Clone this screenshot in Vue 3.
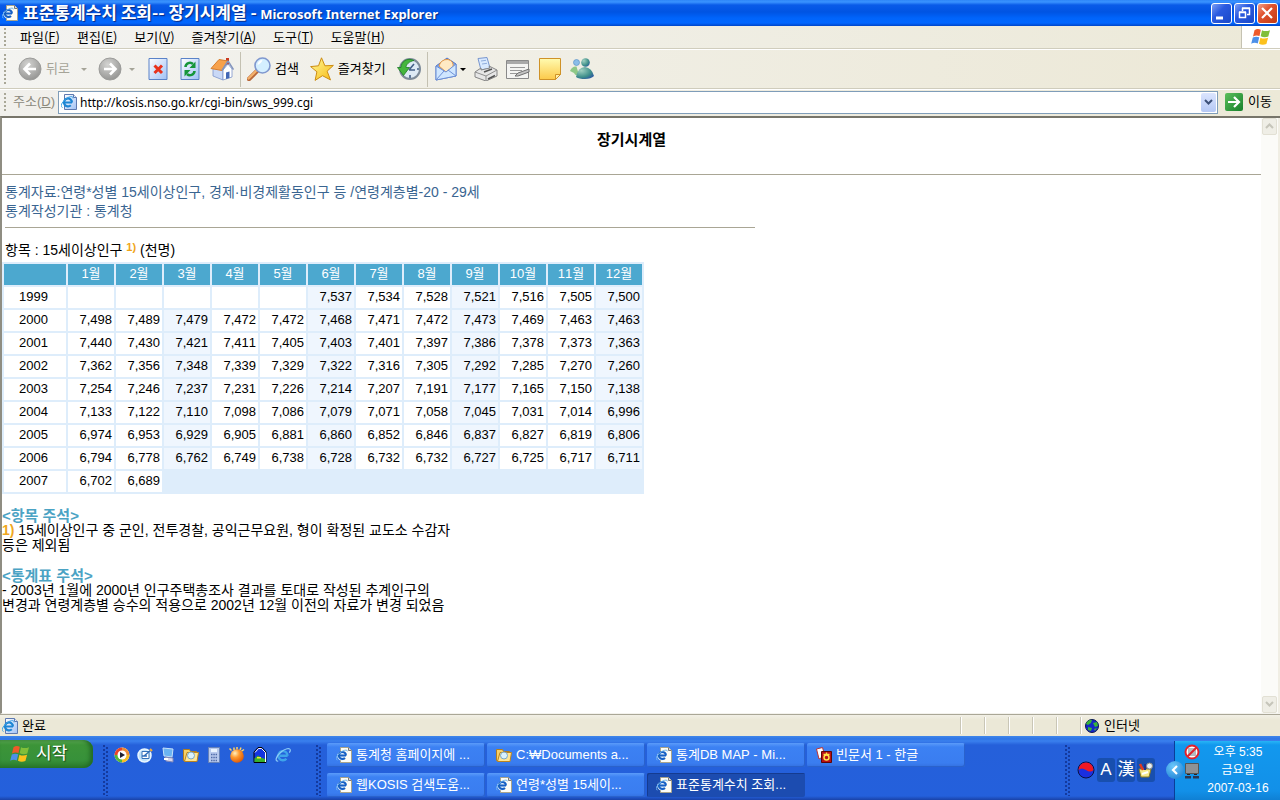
<script setup>
const menus = [
  ['파일', 'F'], ['편집', 'E'], ['보기', 'V'], ['즐겨찾기', 'A'], ['도구', 'T'], ['도움말', 'H'],
]

const months = Array.from({ length: 12 }, (_, i) => `${i + 1}월`)

const rows = [
  { year: 1999, values: ['', '', '', '', '', '7,537', '7,534', '7,528', '7,521', '7,516', '7,505', '7,500'] },
  { year: 2000, values: ['7,498', '7,489', '7,479', '7,472', '7,472', '7,468', '7,471', '7,472', '7,473', '7,469', '7,463', '7,463'] },
  { year: 2001, values: ['7,440', '7,430', '7,421', '7,411', '7,405', '7,403', '7,401', '7,397', '7,386', '7,378', '7,373', '7,363'] },
  { year: 2002, values: ['7,362', '7,356', '7,348', '7,339', '7,329', '7,322', '7,316', '7,305', '7,292', '7,285', '7,270', '7,260'] },
  { year: 2003, values: ['7,254', '7,246', '7,237', '7,231', '7,226', '7,214', '7,207', '7,191', '7,177', '7,165', '7,150', '7,138'] },
  { year: 2004, values: ['7,133', '7,122', '7,110', '7,098', '7,086', '7,079', '7,071', '7,058', '7,045', '7,031', '7,014', '6,996'] },
  { year: 2005, values: ['6,974', '6,953', '6,929', '6,905', '6,881', '6,860', '6,852', '6,846', '6,837', '6,827', '6,819', '6,806'] },
  { year: 2006, values: ['6,794', '6,778', '6,762', '6,749', '6,738', '6,728', '6,732', '6,732', '6,727', '6,725', '6,717', '6,711'] },
  { year: 2007, values: ['6,702', '6,689'] },
]

const quick = ['player', 'outlook', 'desktop', 'folder', 'calc', 'ball', 'picture', 'ie']

const tasks = [
  { icon: 'page', label: '통계청 홈페이지에 ...' },
  { icon: 'folder', label: 'C:₩Documents a...' },
  { icon: 'page', label: '통계DB MAP - Mi...' },
  { icon: 'hangul', label: '빈문서 1 - 한글' },
  { icon: 'page', label: '웹KOSIS 검색도움...' },
  { icon: 'page', label: '연령*성별 15세이...' },
  { icon: 'page', label: '표준통계수치 조회...', active: true },
]
</script>

<template>
  <div class="screen">
    <svg class="defs" aria-hidden="true">
      <defs>
        <linearGradient id="gBlue" x1="0" y1="0" x2="1" y2="1"><stop offset="0" stop-color="#fff" /><stop offset="1" stop-color="#9fc0f5" /></linearGradient>
        <radialGradient id="gGray" cx=".4" cy=".3" r=".8"><stop offset="0" stop-color="#d4d4d2" /><stop offset="1" stop-color="#8e8e8c" /></radialGradient>
        <linearGradient id="gNote" x1="0" y1="0" x2="0" y2="1"><stop offset="0" stop-color="#fffbb0" /><stop offset="1" stop-color="#fcc94a" /></linearGradient>
        <linearGradient id="gStar" x1="0" y1="0" x2="1" y2="1"><stop offset="0" stop-color="#fffa9a" /><stop offset="1" stop-color="#f7b912" /></linearGradient>
        <radialGradient id="gBall" cx=".35" cy=".3" r=".8"><stop offset="0" stop-color="#fff0c0" /><stop offset=".4" stop-color="#ff9a2e" /><stop offset="1" stop-color="#d94e00" /></radialGradient>
        <radialGradient id="gMan" cx=".3" cy=".3" r=".9"><stop offset="0" stop-color="#9fd0c0" /><stop offset=".6" stop-color="#3f8f8a" /><stop offset="1" stop-color="#2446a8" /></radialGradient>

        <symbol id="ie" viewBox="0 0 16 16">
          <path d="M12.6 8.8H5M12.6 8.8a4.6 4.6 0 1 0-1.2 3" fill="none" stroke="#3fa4ea" stroke-width="2.4" />
          <path d="M3.2 14.2C-.5 14.500 1 9 6 5c4-3.300 9-4.600 9.300-2 .1 1-.5 1.800-1 2.600" fill="none" stroke="#8ccbf6" stroke-width="1.200" />
        </symbol>
        <symbol id="page" viewBox="0 0 16 16">
          <path d="M4.500.5h8l3 3v12h-11z" fill="#fdfdf6" stroke="#a9a48c" />
          <path d="M12.500.5v3h3" fill="#ddd" stroke="#777" />
          <path d="M5.500 4.500a4.500 4.500 0 1 0 4 7z" fill="#d6ebfb" />
          <path d="M10 8.500H3M10 8.500a3.600 3.600 0 1 0-1 2.500" fill="none" stroke="#1660c4" stroke-width="2" />
          <path d="M1.500 13C-1.500 12.500 1 8 5 5 8 3 11.500 2.200 11.300 4.400" fill="none" stroke="#6cb4ee" />
        </symbol>
        <symbol id="bluepage" viewBox="0 0 16 16">
          <path d="M3.500.5h9l3 3v12h-12z" fill="url(#gBlue)" stroke="#5e79b0" />
          <path d="M12.500.5v3h3" fill="#e6eefc" stroke="#5e79b0" />
          <path d="M11 8.500H3.500M11 8.500a4 4 0 1 0-1.200 2.800" fill="none" stroke="#1e86d4" stroke-width="2.200" />
          <path d="M1.500 13.500C-1.500 12.500 1 8 5.500 4.500 9 2 12.500 2 12 4.400" fill="none" stroke="#3aa0e4" />
        </symbol>
        <symbol id="flag" viewBox="0 0 20 18">
          <path d="M3.500 2.200Q6.500 0 9.800 1.800L8.500 8Q5.500 6.600 2 8.400z" fill="#ef5a29" />
          <path d="M11 2.200q3.500 1.800 8 0l-1.700 6.200q-3.500 1.700-7.600-.1z" fill="#80bf3a" />
          <path d="M1.800 9.600Q5 7.900 8.200 9.300L6.800 15.500Q3.500 14 .2 15.700z" fill="#4d90e8" />
          <path d="M9.400 9.700q3.500 1.700 7.700.1l-1.700 6.100q-3.700 1.700-7.400-.1z" fill="#fcc11c" />
        </symbol>
        <symbol id="back" viewBox="0 0 24 24">
          <circle cx="12" cy="12" r="11" fill="url(#gGray)" stroke="#9c9c9a" />
          <path d="M18 12H7M12 6.500 6.500 12l5.500 5.500" fill="none" stroke="#fff" stroke-width="2.600" />
        </symbol>
        <symbol id="fwd" viewBox="0 0 24 24">
          <circle cx="12" cy="12" r="11" fill="url(#gGray)" stroke="#9c9c9a" />
          <path d="M6 12h11M12 6.500 17.500 12 12 17.500" fill="none" stroke="#fff" stroke-width="2.600" />
        </symbol>
        <symbol id="stop" viewBox="0 0 24 24">
          <path d="M3 1.500h18v21H3z" fill="url(#gBlue)" stroke="#5a82c8" />
          <path d="m8.500 8.500 7.500 7.500m0-7.500-7.500 7.500" stroke="#e8321c" stroke-width="3" />
        </symbol>
        <symbol id="refresh" viewBox="0 0 24 24">
          <path d="M3 1.500h18v21H3z" fill="url(#gBlue)" stroke="#5a82c8" />
          <path d="M7.500 10a4.500 4.500 0 0 1 7.500-3M16.500 14a4.500 4.500 0 0 1-7.500 3" fill="none" stroke="#16963a" stroke-width="2.600" />
          <path d="M17.500 4.500V11h-6zM6.500 19.500V13h6z" fill="#16963a" />
        </symbol>
        <symbol id="home" viewBox="0 0 24 24">
          <path d="M16 1h3v7h-3z" fill="#c93a20" />
          <path d="M3 12v7l10 4V11L8 6z" fill="#c9d8f6" stroke="#7d96cb" stroke-width=".8" />
          <path d="m13 13 5-6 4 5v8l-9 3z" fill="#fff" stroke="#7d96cb" stroke-width=".8" />
          <path d="M1 11.500 9 2.500 18 4l-6 9.500z" fill="#f7a14b" stroke="#d87d2c" />
          <path d="m18 4 5.500 8.500M12 13.500 18 4" stroke="#8394bd" stroke-width="1.500" />
          <path d="M16 15.500l3.500-1V21L16 22z" fill="#4266b5" />
        </symbol>
        <symbol id="search" viewBox="0 0 24 24">
          <path d="m10 14-8 8" stroke="#b8683a" stroke-width="4.500" stroke-linecap="round" />
          <path d="m9.500 13.500-8 8" stroke="#f3b16c" stroke-width="2.400" stroke-linecap="round" />
          <circle cx="15.500" cy="8.500" r="7.500" fill="#d4efff" stroke="#8098cf" stroke-width="1.600" />
          <path d="M10.500 8a5 5 0 0 1 5-5c-1 3-3 4-5 5z" fill="#fff" />
        </symbol>
        <symbol id="star" viewBox="0 0 24 24">
          <path d="m11.500.8 3.400 8 8.500-.4-6.300 5.800 3.400 8.700-8-4.200-7.400 4.700 1.800-8.600L.6 9.600l7.900-.8z" fill="url(#gStar)" stroke="#cc8c14" stroke-linejoin="round" />
        </symbol>
        <symbol id="history" viewBox="0 0 24 24">
          <circle cx="13" cy="12" r="10" fill="#ddeaf5" stroke="#7d8b99" stroke-width="2" />
          <path d="m12 13 5-6M12 13h6M13 18v3M20 12h2" stroke="#436088" stroke-width="1.600" fill="none" />
          <path d="M17 3.500C10 0 4 5 4 10.500H.5l6 8 6-8H9c0-3 3-6 8-7z" fill="#45b63d" stroke="#1d7c24" stroke-width=".8" />
        </symbol>
        <symbol id="mail" viewBox="0 0 24 24">
          <path d="M2 9 13 1l9 6v12L2 23z" fill="#7fa6e8" stroke="#5577c5" />
          <path d="M5 9q2-7 9-6.500Q20 4 19 10l-7 5z" fill="#ffe9c4" stroke="#ec9a42" />
          <path d="m2 9 10 6 10-8v12L2 23z" fill="#cfe6ff" stroke="#6d90d6" />
          <path d="m2 23 8-9m12 5-8-6" stroke="#6d90d6" />
        </symbol>
        <symbol id="printer" viewBox="0 0 24 24">
          <path d="M4 1.500 13 .5 16 11l-9 2z" fill="#d8e9ff" stroke="#7896ce" />
          <path d="m7 4 5-.7M8 7l5-.7" stroke="#90aede" />
          <path d="m1 15 6-4v2l9-2-1-2 8 4v6L12 24 1 20z" fill="#e6e6e6" stroke="#858585" />
          <path d="m1 15 11 4 11-6M12 19v5" fill="none" stroke="#8f8f8f" />
          <path d="m10 15 8-3M14 22l7-3.500" stroke="#555" stroke-width="1.500" />
        </symbol>
        <symbol id="edit" viewBox="0 0 24 24">
          <path d="M.5 3.500h22v18H.5z" fill="#f4f4f2" stroke="#898989" />
          <path d="M1 4h21v3H1z" fill="#a9a9a9" />
          <path d="M4 10.500h15M4 13.500h12M4 16.500h7" stroke="#999" />
          <path d="m9 19 3-3 11-4v3l-11 4z" fill="#c4c4c4" stroke="#707070" />
        </symbol>
        <symbol id="note" viewBox="0 0 24 24">
          <path d="M1.500 1.500h21v16l-5 5h-16z" fill="url(#gNote)" stroke="#cf9227" />
          <path d="M17.500 22.500v-5h5z" fill="#fff0a6" stroke="#cf9227" />
        </symbol>
        <symbol id="people" viewBox="0 0 24 24">
          <circle cx="6.500" cy="5.500" r="3" fill="#8abde8" stroke="#5c93c9" stroke-width=".7" />
          <path d="M0 14q2-5 6.500-4.500L9 18q-4 1-5-2z" fill="#8fc887" />
          <circle cx="15.500" cy="5.500" r="4.300" fill="url(#gMan)" />
          <path d="M6 20q2-10 9-10 7 1 9 9-3 3-9 3-6 0-9-2z" fill="url(#gMan)" />
        </symbol>
        <symbol id="player" viewBox="0 0 16 16">
          <circle cx="8" cy="8" r="7.500" fill="#f8f8f8" />
          <path d="M8 .5A7.500 7.500 0 0 0 .5 8L4 8a4 4 0 0 1 4-4z" fill="#e8452a" />
          <path d="M.5 8A7.500 7.500 0 0 0 8 15.500V12a4 4 0 0 1-4-4z" fill="#56b63b" />
          <path d="M8 15.500A7.500 7.500 0 0 0 15.500 8H12a4 4 0 0 1-4 4z" fill="#f6bd23" />
          <path d="M8 .5A7.500 7.500 0 0 1 15.500 8H12a4 4 0 0 0-4-4z" fill="#ee8c35" />
          <circle cx="8" cy="8" r="4.500" fill="#fff" /><path d="m6 5 5 3-5 3z" fill="#223" />
        </symbol>
        <symbol id="outlook" viewBox="0 0 16 16">
          <circle cx="7.500" cy="8.500" r="6.500" fill="#bfe2fb" stroke="#e9f6ff" stroke-width="1.500" />
          <path d="M5 4.500h7v7H5z" fill="#fff" stroke="#3672b8" />
          <path d="m7 9 7-6M5 9h5" stroke="#2f6fba" stroke-width="1.500" /><path d="m13 2 2 2" stroke="#f3a935" stroke-width="2" />
        </symbol>
        <symbol id="desktop" viewBox="0 0 16 16">
          <path d="m3 1 10 1-1 8-8-1z" fill="#6bb3f2" stroke="#c7e2fa" />
          <path d="m5 10 8 1v4l-7-1z" fill="#d9d7ee" stroke="#8088b8" /><path d="M4 12h4" stroke="#fff" stroke-width="2" />
        </symbol>
        <symbol id="folder" viewBox="0 0 16 16">
          <path d="M.5 2.500h6l1 2h6v9H.5z" fill="#f7d067" stroke="#b17d1e" />
          <path d="M4 5.500h11.500l-1.500 9H1.500z" fill="#ffe594" stroke="#ba8421" />
          <circle cx="8" cy="8.500" r="3.500" fill="#d9f2ff" stroke="#7ba7c4" />
        </symbol>
        <symbol id="calc" viewBox="0 0 16 16">
          <path d="M2.500.5h11v15h-11z" fill="#b7c9ed" stroke="#6682b9" />
          <path d="M5 2h6v3H5z" fill="#eaf4ff" />
          <path d="M5 7.500h6M5 10.500h6M5 13.500h6" stroke="#4f6ba8" stroke-dasharray="1.500 .8" stroke-width="1.500" />
        </symbol>
        <symbol id="ball" viewBox="0 0 16 16">
          <path d="m2.500 3.500-2-2m4.500 1.500V.5m3 2V0m3 3 1-2.500m0 4 3-2" stroke="#ffd163" stroke-width="1.500" />
          <circle cx="8" cy="9" r="6.800" fill="url(#gBall)" />
        </symbol>
        <symbol id="picture" viewBox="0 0 16 16">
          <path d="M2 15.500V5l4-4.500h4L14 5v10.500z" fill="#1434e0" stroke="#000" />
          <path d="M2.500 11.500 6 8.500l3 2 4 1.500v3H2.500z" fill="#39b12b" /><path d="M5 10h4v1.500H5z" fill="#f2e339" />
          <path d="M3 5.500 6.500 1.500h3l4 4V15" fill="none" stroke="#fff" />
        </symbol>
        <symbol id="hangul" viewBox="0 0 16 16">
          <path d="m.5 2 6-1.500L9 9l-6 3z" fill="#fff" stroke="#b33" />
          <path d="M5.500 4.500h10v11h-10z" fill="#b80f16" stroke="#5d0505" />
          <circle cx="10.500" cy="10.500" r="2.500" fill="none" stroke="#ffe04a" stroke-width="1.500" /><path d="M7.500 7.500h6M10.500 5.500v2" stroke="#ffe04a" stroke-width="1.400" />
        </symbol>
        <symbol id="earth" viewBox="0 0 14 14">
          <circle cx="7" cy="7" r="6.500" fill="#1427c8" stroke="#0a1450" />
          <path d="M2 3q3-3 5-2L6 4 3 6 1 5zM8 4l4-1 1 4-3 1zM3 8l4 1-1 3-3-1zM9 10l3-1-2 3z" fill="#39b438" />
        </symbol>
      </defs>
    </svg>

    <header class="titlebar">
      <svg width="16" height="16"><use href="#page" /></svg>
      <h1><span class="ko">표준통계수치 조회-- 장기시계열 -</span> Microsoft Internet Explorer</h1>
      <div class="caption">
        <button aria-label="최소화"><svg width="21" height="21"><path d="M5 15h7" stroke="#fff" stroke-width="3" /></svg></button>
        <button aria-label="이전 크기로"><svg width="21" height="21"><path d="M8.500 8V5.500h7v6H13M5.500 9.500h6v5h-6zM5 9h7M8 5h8" fill="none" stroke="#fff" stroke-width="1.500" /></svg></button>
        <button class="close" aria-label="닫기"><svg width="21" height="21"><path d="m5 5 10 10M15 5 5 15" stroke="#fff" stroke-width="2.200" /></svg></button>
      </div>
    </header>

    <nav class="menubar">
      <i class="dots"></i>
      <button v-for="m in menus" :key="m[1]">{{ m[0] }}(<u>{{ m[1] }}</u>)</button>
      <div class="brand"><svg width="20" height="18"><use href="#flag" /></svg></div>
    </nav>

    <div class="toolbar">
      <i class="dots"></i>
      <button class="off"><svg><use href="#back" /></svg>뒤로</button>
      <button class="drop off" aria-label="뒤로 목록"></button>
      <div class="pair">
        <button aria-label="앞으로"><svg><use href="#fwd" /></svg></button>
        <button class="drop off" aria-label="앞으로 목록"></button>
      </div>
      <button aria-label="중지"><svg><use href="#stop" /></svg></button>
      <button aria-label="새로 고침"><svg><use href="#refresh" /></svg></button>
      <button aria-label="홈"><svg><use href="#home" /></svg></button>
      <i class="sep"></i>
      <button class="named"><svg><use href="#search" /></svg>검색</button>
      <button class="named"><svg><use href="#star" /></svg>즐겨찾기</button>
      <button aria-label="목록"><svg><use href="#history" /></svg></button>
      <i class="sep"></i>
      <div class="pair tight">
        <button aria-label="메일"><svg><use href="#mail" /></svg></button>
        <button class="drop" aria-label="메일 목록"></button>
      </div>
      <button aria-label="인쇄"><svg><use href="#printer" /></svg></button>
      <button aria-label="편집"><svg><use href="#edit" /></svg></button>
      <button aria-label="토론"><svg><use href="#note" /></svg></button>
      <button aria-label="메신저"><svg><use href="#people" /></svg></button>
    </div>

    <form class="address" @submit.prevent>
      <i class="dots"></i>
      <label for="url">주소(<u>D</u>)</label>
      <div class="field">
        <svg width="16" height="16"><use href="#bluepage" /></svg>
        <input id="url" type="text" value="http://kosis.nso.go.kr/cgi-bin/sws_999.cgi">
        <button type="button" aria-label="주소 목록"><svg width="9" height="7"><path d="m1 1 3.500 3.500L8 1" fill="none" stroke="#3c5078" stroke-width="2" /></svg></button>
      </div>
      <button class="go"><svg width="18" height="18"><path d="M3 9h10M9 4l5 5-5 5" fill="none" stroke="#fff" stroke-width="2.200" /></svg>이동</button>
    </form>

    <div class="view">
      <main>
        <h2>장기시계열</h2>
        <hr class="wide">
        <section class="info">
          <p>통계자료:연령*성별 15세이상인구, 경제·비경제활동인구 등 /연령계층별-20 - 29세</p>
          <p>통계작성기관 : 통계청</p>
          <hr>
          <p class="item">항목 : 15세이상인구 <sup>1)</sup> (천명)</p>
        </section>
        <table>
          <thead>
            <tr><th class="year"></th><th v-for="m in months" :key="m" scope="col">{{ m }}</th></tr>
          </thead>
          <tbody>
            <tr v-for="r in rows" :key="r.year">
              <th class="year" scope="row">{{ r.year }}</th>
              <td v-for="(v, i) in r.values" :key="i" :class="{ tint: v && i % 3 === 2 }">{{ v }}</td>
            </tr>
          </tbody>
        </table>
        <section class="notes">
          <h3>&lt;항목 주석&gt;</h3>
          <p><b>1)</b> 15세이상인구 중 군인, 전투경찰, 공익근무요원, 형이 확정된 교도소 수감자<br>등은 제외됨</p>
          <h3>&lt;통계표 주석&gt;</h3>
          <p>- 2003년 1월에 2000년 인구주택총조사 결과를 토대로 작성된 추계인구의<br>변경과 연령계층별 승수의 적용으로 2002년 12월 이전의 자료가 변경 되었음</p>
        </section>
      </main>
      <div class="scroll">
        <button aria-label="위로"><svg width="9" height="7"><path d="m1 5 3.500-3.500L8 5" fill="none" stroke="#c6c5ba" stroke-width="2" /></svg></button>
        <button aria-label="아래로"><svg width="9" height="7"><path d="m1 1 3.500 3.500L8 1" fill="none" stroke="#c6c5ba" stroke-width="2" /></svg></button>
      </div>
    </div>

    <footer class="status">
      <div class="done"><svg width="16" height="16"><use href="#bluepage" /></svg>완료</div>
      <i v-for="n in 5" :key="n" class="pane"></i>
      <div class="zone"><svg width="14" height="14"><use href="#earth" /></svg>인터넷</div>
    </footer>

    <div class="taskbar">
      <button class="start"><svg width="20" height="18"><use href="#flag" /></svg>시작</button>
      <i class="grip"></i>
      <div class="quick">
        <button v-for="q in quick" :key="q" :aria-label="q"><svg width="16" height="16"><use :href="'#' + q" /></svg></button>
      </div>
      <i class="grip"></i>
      <div class="tasks">
        <button v-for="t in tasks" :key="t.label" :class="{ active: t.active }"><svg width="16" height="16"><use :href="'#' + t.icon" /></svg>{{ t.label }}</button>
      </div>
      <i class="grip"></i>
      <div class="ime">
        <svg width="18" height="18" viewBox="0 0 18 18"><circle cx="9" cy="9" r="8" fill="#1a2fe0" stroke="#0b1240" /><path d="M1.500 9a7.500 7.500 0 0 1 15 0q-3 3-7.500 0T1.500 9z" fill="#f01822" /></svg>
        <button>A</button>
        <button>漢</button>
        <button aria-label="입력 도구"><svg width="16" height="16" viewBox="0 0 16 16"><path d="M1 7h12l-2 8H3z" fill="#f5e98a" stroke="#8d7b22" /><path d="m5 8-3-6" stroke="#e23a20" stroke-width="2.500" /><path d="M7 8V2" stroke="#26308c" stroke-width="2" /><circle cx="11.500" cy="4" r="3" fill="#e8f0f4" stroke="#888" /><path d="m4 12 6-2" stroke="#fff" stroke-width="2" /></svg></button>
      </div>
      <div class="tray">
        <button class="chev" aria-label="숨겨진 아이콘"><svg width="18" height="18"><path d="m11 5-4 4 4 4" fill="none" stroke="#fff" stroke-width="2.200" /></svg></button>
        <div class="trayicons">
          <svg width="16" height="16" viewBox="0 0 16 16"><circle cx="8" cy="8" r="7" fill="#fff" /><path d="M4 4h8v8H4z" fill="#b4b9c0" /><circle cx="8" cy="8" r="6.500" fill="none" stroke="#e0222c" stroke-width="2" /><path d="m12.500 3.500-9 9" stroke="#e0222c" stroke-width="2" /></svg>
          <svg width="16" height="16" viewBox="0 0 16 16"><path d="M1.500.5h13v10h-13z" fill="#8e9296" stroke="#555" /><path d="M1 13h6v2.500H1zM9 13h6v2.500H9z" fill="#2c3550" /><path d="M3 11.500h3m4 0h3" stroke="#222" /></svg>
        </div>
        <div class="clock"><span>오후 5:35</span><span>금요일</span><span>2007-03-16</span></div>
      </div>
    </div>
  </div>
</template>

<style>
body { margin: 0; }
</style>

<style scoped>
* { box-sizing: border-box; }
.screen {
  min-height: 100vh;
  display: flex;
  flex-direction: column;
  font-family: "Liberation Sans", "Noto Sans CJK KR", sans-serif;
  font-size: 13px;
  line-height: 16px;
  font-kerning: none;
  color: #000;
  background: #ece9d8;
}
.defs { position: absolute; width: 0; height: 0; }
svg { display: block; flex: none; }
button { font: inherit; font-kerning: none; color: inherit; border: 0; padding: 0; background: none; display: flex; align-items: center; white-space: nowrap; }
h1, h2, h3, p { margin: 0; }

.titlebar {
  height: 26px;
  display: flex;
  align-items: center;
  padding: 0 2px;
  gap: 5px;
  background: linear-gradient(#2f86f8 0, #3a93ff 2px, #0a5be8 5px, #0054e3 12px, #0064fb 18px, #0267ff 23px, #0045c8 26px);
}
.titlebar h1 {
  flex: 1;
  font-family: "Noto Sans", "Noto Sans CJK KR", sans-serif;
  font-size: 13px;
  font-weight: 700;
  color: #fff;
  text-shadow: 1px 1px 1px #0a2a80;
  white-space: nowrap;
}
.titlebar .ko { font-family: "Noto Sans CJK KR", sans-serif; font-size: 17px; }
.caption { display: flex; gap: 2px; }
.caption button { width: 21px; height: 21px; border: 1px solid #fff; border-radius: 3px; background: linear-gradient(135deg, #7d9ff5, #2a5ae0 40%, #1a48c8); justify-content: center; }
.caption .close { background: linear-gradient(135deg, #f2a08a, #e0522e 40%, #c23a14); }

.menubar { height: 23px; display: flex; align-items: center; gap: 17px; padding-left: 4px; font-family: "Noto Sans CJK KR", sans-serif; background: linear-gradient(90deg, #f3f3f1, #ece9d8); border-bottom: 1px solid #d0cdbd; }
.menubar .dots { margin-right: -3px; }
.brand { margin-left: auto; align-self: stretch; width: 39px; display: flex; align-items: center; justify-content: center; background: #fff; border-left: 1px solid #c5c2b2; }
.dots { flex: none; width: 2px; height: 18px; background: repeating-linear-gradient(#a9a797 0 2px, transparent 2px 4px); }

.toolbar { height: 40px; display: flex; align-items: center; gap: 8px; padding: 0 4px; border-top: 1px solid #fff; border-bottom: 1px solid #cfccbc; background: linear-gradient(90deg, #f3f3f0, #ece8d6); }
.toolbar .dots { height: 30px; margin-right: 4px; }
.toolbar button { gap: 4px; }
.toolbar svg { width: 24px; height: 24px; }
.toolbar .named { padding-right: 3px; }
.off { color: #a5a498; }
.drop { width: 12px; height: 24px; justify-content: center; }
.drop::after { content: ""; border: 3px solid transparent; border-top-color: currentColor; border-bottom: 0; }
.pair { display: flex; gap: 4px; }
.pair.tight { gap: 2px; }
.tight .drop { width: 6px; }
.sep { width: 1px; height: 35px; margin: 0 -2px; background: #c4c1b2; }

.address { height: 27px; display: flex; align-items: center; padding: 0 8px 2px 4px; gap: 7px; border-top: 1px solid #fff; background: linear-gradient(90deg, #f1f0ec, #ece9d8); }
.address label { color: #8b897c; margin-right: -4px; }
.field { flex: 1; height: 23px; display: flex; align-items: center; gap: 3px; padding: 1px 1px 1px 2px; background: #fff; border: 1px solid #7f9db9; }
.field input { flex: 1; min-width: 0; border: 0; padding: 0; outline: 0; background: none; font-family: "Noto Sans", "Noto Sans CJK KR", sans-serif; font-size: 12px; }
.field button { width: 15px; height: 19px; justify-content: center; border-radius: 2px; background: linear-gradient(#dbe5fe, #b5c8f5); }
.go { gap: 5px; }
.go svg { background: linear-gradient(135deg, #5cbf5c, #15802a); border-radius: 2px; }

.view { flex: 1; display: flex; border-top: 2px solid #77756a; border-left: 2px solid #8f8d82; border-bottom: 1px solid #f4f3ee; background: #fff; }
main { flex: 1; min-width: 0; }
.scroll { width: 19px; display: flex; flex-direction: column; justify-content: space-between; align-items: center; background: #fbfbf8; border-right: 2px solid #f0eee4; }
.scroll button { width: 15px; height: 17px; justify-content: center; background: #efeee6; border: 1px solid #e2e0d4; border-radius: 2px; }
main h2 { font-size: 15px; line-height: 20px; text-align: center; padding: 12px 0 24px; }
hr { margin: 0; border: 0; height: 1px; background: #a9a695; }
.info { padding: 8px 3px 0; font-size: 14px; line-height: 19px; color: #3a6591; }
.info hr { max-width: 750px; margin: 6px 0 13px; }
.info .item { color: #000; line-height: 18px; padding-bottom: 3px; }
sup { font-size: 11px; line-height: 0; font-weight: 700; color: #f0a418; vertical-align: 4px; }

table { border-spacing: 2px; background: #deedfb; font-size: 13px; line-height: 19px; table-layout: fixed; width: 642px; }
th, td { height: 21px; padding: 0 2px 2px; background: #fff; font-weight: 400; }
td { text-align: right; }
td.tint { background: #eff6fe; }
thead th { background: #4ca8cf; color: #fff; }
.year { width: 62px; }
tbody .year { padding-right: 5px; }

.notes { padding-top: 14px; font-size: 14px; line-height: 15px; }
.notes h3 { font-size: 15px; line-height: 15px; color: #4ba3c4; }
.notes p + h3 { margin-top: 15px; }
.notes b { color: #f0a820; }

.status { height: 22px; display: flex; align-items: center; border-top: 1px solid #aaa797; background: linear-gradient(#f2f0e6, #ebe8d7 5px); }
.done { flex: 1; display: flex; align-items: center; gap: 4px; padding-left: 2px; }
.pane { width: 24px; height: 17px; border-left: 1px solid #c9c6b6; box-shadow: inset 1px 0 #fff; }
.zone { width: 200px; height: 17px; display: flex; align-items: center; gap: 5px; padding-left: 4px; border-left: 1px solid #c9c6b6; box-shadow: inset 1px 0 #fff; }

.taskbar { height: 64px; display: flex; align-items: flex-start; color: #fff; background: linear-gradient(#3f86ea 0, #2f75e6 3px, #3a80ee 5px, #2560da 9px, #2460dc 60px, #1a42a8 64px); }
.start { width: 93px; height: 28px; margin: 4px 10px 0 0; padding-left: 10px; gap: 6px; font-size: 17px; text-shadow: 1px 1px 1px #1b4a1b; border-radius: 0 9px 9px 0; background: linear-gradient(#5eac56, #3c9438 5px, #37913a 20px, #2a7a2c); box-shadow: inset -3px 0 4px #226a24; }
.grip {
  flex: none;
  width: 5px;
  height: 51px;
  margin-top: 9px;
  background:
    repeating-linear-gradient(#143a9e 0 2px, transparent 2px 4px) 0 0 / 2px 100% no-repeat,
    repeating-linear-gradient(transparent 0 2px, #143a9e 2px 4px) 3px 0 / 2px 100% no-repeat;
}
.quick { width: 208px; display: flex; gap: 7px; padding: 11px 0 0 6px; }
.tasks { flex: 1; max-width: 744px; display: grid; grid-template-columns: repeat(4, 158px); gap: 6px 2px; padding: 7px 0 0 6px; align-content: start; }
.tasks button { height: 24px; gap: 4px; padding-left: 9px; border-radius: 2px; background: linear-gradient(#5b9bfa, #3c81f3 4px, #3a7df0 20px, #3370e0); box-shadow: inset -1px -1px #2a62cc; }
.tasks .active { background: #1c4cb0; box-shadow: inset 1px 1px #153b90; }
.ime { display: flex; align-items: center; gap: 2px; padding: 22px 0 0 7px; }
.ime button { width: 18px; height: 24px; justify-content: center; background: #184fae; border-radius: 3px; font-size: 17px; }
.tray { position: relative; margin-left: auto; width: 106px; height: 59px; margin-top: 5px; display: flex; background: linear-gradient(#28b5f5, #1298ee 4px, #1290e8 50px, #0f80d4); border-left: 1px solid #0a3e98; }
.chev { position: absolute; left: -9px; top: 20px; width: 18px; height: 18px; border-radius: 50%; background: radial-gradient(circle at 40% 30%, #6cc8fb, #1377cf); }
.trayicons { display: flex; flex-direction: column; gap: 3px; padding: 3px 0 0 9px; }
.clock { flex: 1; display: flex; flex-direction: column; align-items: center; line-height: 18px; padding: 2px 4px 0 0; font-size: 12px; }
</style>
